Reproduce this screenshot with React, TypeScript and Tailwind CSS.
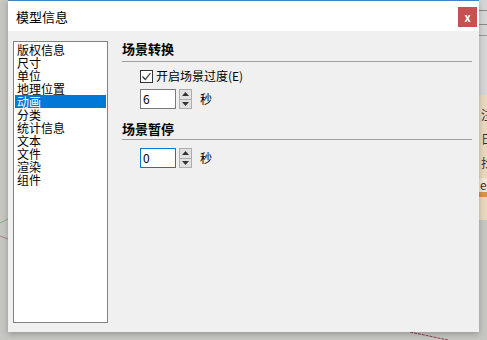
import React from "react";

const font = { fontFamily: '"Noto Sans CJK SC", "Noto Sans", sans-serif' };

function Spinner({ value, focused }: { value: string; focused?: boolean }) {
  return (
    <div className="flex items-center h-[20px]">
      <div
        className={
          "w-[36px] h-[20px] bg-white border flex items-center pl-[2px] text-[12px] leading-none text-black " +
          (focused ? "border-[#0078d7]" : "border-[#7a7a7a]")
        }
      >
        {value}
      </div>
      <div className="ml-[3px] w-[13px] h-[20px] flex flex-col border border-[#adadad] bg-[#e1e1e1]">
        <div className="flex-1 flex items-center justify-center border-b border-[#adadad]">
          <svg width="7" height="4" viewBox="0 0 7 4">
            <path d="M0 4 L3.5 0 L7 4 Z" fill="#333" />
          </svg>
        </div>
        <div className="flex-1 flex items-center justify-center">
          <svg width="7" height="4" viewBox="0 0 7 4">
            <path d="M0 0 L3.5 4 L7 0 Z" fill="#333" />
          </svg>
        </div>
      </div>
      <span className="ml-[8px] text-[12px] leading-none text-black">秒</span>
    </div>
  );
}

export default function App() {
  const items = ["版权信息", "尺寸", "单位", "地理位置", "动画", "分类", "统计信息", "文本", "文件", "渲染", "组件"];
  return (
    <div className="relative w-[487px] h-[340px] overflow-hidden bg-[#c6c6c2]" style={font}>
      {/* desktop background pieces */}
      <div className="absolute left-[478px] top-0 w-[20px] h-[95px] bg-[#d6d6d6]">
        <div className="mt-[10px] h-px bg-[#8a8a8a]" />
        <div className="mt-[13px] h-px bg-[#8a8a8a]" />
        <div className="mt-[10px] h-px bg-[#9a9a9a]" />
      </div>
      <div className="absolute left-[478px] top-[95px] w-[20px] h-[125px] bg-[#e9d8be] flex flex-col text-[12px] text-[#333] pl-[3px]">
        <div className="mt-[14px] leading-none">注</div>
        <div className="mt-[12px] leading-none">日</div>
        <div className="mt-[12px] leading-none">找</div>
        <div className="mt-[9px] h-[14px] bg-[#f3e8d6] leading-[14px] -ml-[3px] pl-[2px]">e</div>
        <div className="h-[5px] bg-[#d9914e] -ml-[3px]" />
      </div>
      <svg className="absolute left-0 top-0" width="487" height="340">
        <line x1="0" y1="223" x2="8" y2="219" stroke="#7fae7f" strokeWidth="1" />
        <line x1="0" y1="236" x2="8" y2="239" stroke="#b07a84" strokeWidth="1" />
        <line x1="410" y1="332" x2="448" y2="340" stroke="#9a3a4a" strokeWidth="1" strokeDasharray="3 1" />
      </svg>

      {/* dialog */}
      <div className="absolute left-[8px] top-0 w-[471px] h-[332px] flex flex-col bg-[#f0f0f0] shadow-[0_2px_6px_rgba(0,0,0,0.25)]">
        <div className="h-[31px] bg-white border-t border-[#3f86c8] flex items-center justify-between pl-[8px] pr-[2px]">
          <span className="text-[13px] leading-none text-black">模型信息</span>
          <div className="w-[19px] h-[20px] bg-[#c75050] flex items-center justify-center text-white text-[11px] font-bold leading-none mt-[2px]">
            x
          </div>
        </div>
        <div className="flex flex-1 pl-[5px] pt-[10px] pb-[9px] pr-[7px]">
          <div className="w-[95px] h-full bg-white border border-[#828282] pt-[1px] px-[1px]">
            {items.map((t) => (
              <div
                key={t}
                className={
                  "h-[13px] leading-[13px] text-[12px] pl-[2px] " +
                  (t === "动画" ? "bg-[#0078d7] text-white" : "text-black")
                }
              >
                {t}
              </div>
            ))}
          </div>
          <div className="flex-1 flex flex-col ml-[14px]">
            <div className="h-[18px] -mt-[1px] flex items-center text-[13px] font-bold text-black">场景转换</div>
            <div className="mt-[3px] h-px bg-[#a0a0a0]" />
            <div className="mt-[7px] h-[14px] flex items-center ml-[18px]">
              <div className="w-[13px] h-[13px] border border-[#333] bg-white flex items-center justify-center">
                <svg width="11" height="11" viewBox="0 0 11 11">
                  <path d="M1.5 5.5 L4.3 8.5 L9.5 2" stroke="#333" strokeWidth="1.2" fill="none" />
                </svg>
              </div>
              <span className="ml-[3px] text-[12px] leading-none text-black">开启场景过度(E)</span>
            </div>
            <div className="mt-[6px] ml-[18px]">
              <Spinner value="6" />
            </div>
            <div className="mt-[11px] h-[18px] flex items-center text-[13px] font-bold text-black">场景暂停</div>
            <div className="mt-[1px] h-px bg-[#a0a0a0]" />
            <div className="mt-[8px] ml-[18px]">
              <Spinner value="0" focused />
            </div>
          </div>
        </div>
      </div>
    </div>
  );
}
